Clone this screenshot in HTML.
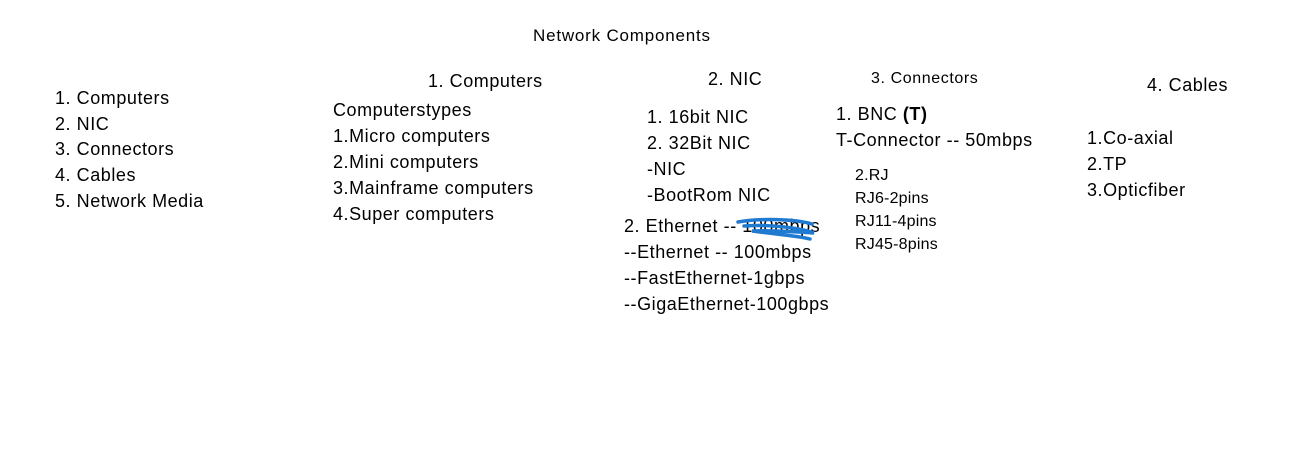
<!DOCTYPE html>
<html><head><meta charset="utf-8"><style>
body{margin:0;width:1293px;height:460px;background:#fff;position:relative;overflow:hidden;font-family:"Liberation Sans",sans-serif;color:#000}
div{position:absolute;white-space:nowrap;font-size:18px;line-height:20px;letter-spacing:0.55px}
.s{font-size:16px;letter-spacing:0.2px}
</style></head><body>
<div style="left:533px;top:26px;font-size:17px;letter-spacing:0.8px">Network Components</div>

<div style="left:55px;top:88px">1. Computers</div>
<div style="left:55px;top:114px">2. NIC</div>
<div style="left:55px;top:139px">3. Connectors</div>
<div style="left:55px;top:165px">4. Cables</div>
<div style="left:55px;top:191px">5. Network Media</div>

<div style="left:428px;top:71px">1. Computers</div>
<div style="left:333px;top:100px">Computerstypes</div>
<div style="left:333px;top:126px">1.Micro computers</div>
<div style="left:333px;top:152px">2.Mini computers</div>
<div style="left:333px;top:178px">3.Mainframe computers</div>
<div style="left:333px;top:204px">4.Super computers</div>

<div style="left:708px;top:69px">2. NIC</div>
<div style="left:647px;top:107px">1. 16bit NIC</div>
<div style="left:647px;top:133px">2. 32Bit NIC</div>
<div style="left:647px;top:159px">-NIC</div>
<div style="left:647px;top:185px">-BootRom NIC</div>
<div style="left:624px;top:216px">2. Ethernet -- 100mbps</div>
<div style="left:624px;top:242px">--Ethernet -- 100mbps</div>
<div style="left:624px;top:268px">--FastEthernet-1gbps</div>
<div style="left:624px;top:294px">--GigaEthernet-100gbps</div>

<div class="s" style="left:871px;top:69px;letter-spacing:0.6px">3. Connectors</div>
<div style="left:836px;top:104px">1. BNC <b>(T)</b></div>
<div style="left:836px;top:130px">T-Connector -- 50mbps</div>
<div class="s" style="left:855px;top:166px">2.RJ</div>
<div class="s" style="left:855px;top:189px">RJ6-2pins</div>
<div class="s" style="left:855px;top:212px">RJ11-4pins</div>
<div class="s" style="left:855px;top:235px">RJ45-8pins</div>

<div style="left:1147px;top:75px">4. Cables</div>
<div style="left:1087px;top:128px">1.Co-axial</div>
<div style="left:1087px;top:154px">2.TP</div>
<div style="left:1087px;top:180px">3.Opticfiber</div>

<svg style="position:absolute;left:0;top:0" width="1293" height="460">
<path d="M738 222 C760 218 795 219 812 224 M744 226 C770 224 800 228 814 233 C795 232 770 230 752 231 C775 234 800 236 810 239" fill="none" stroke="#1f7ad1" stroke-width="3.5" stroke-linecap="round"/>
</svg>
</body></html>
